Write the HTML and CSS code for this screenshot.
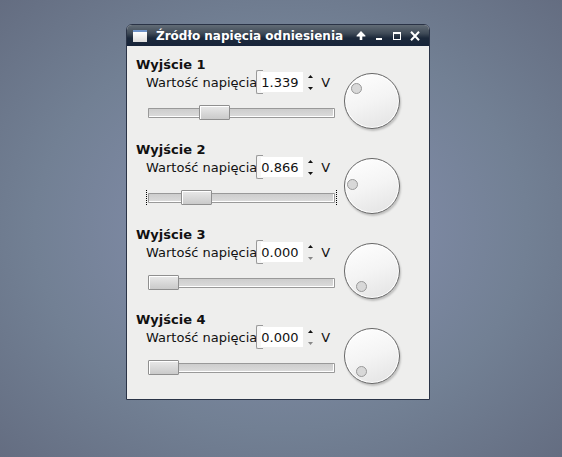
FILE: index.html
```html
<!DOCTYPE html>
<html lang="pl">
<head>
  <meta charset="UTF-8" />
  <meta name="viewport" content="width=device-width, initial-scale=1.0"/>
  <title>Źródło napięcia odniesienia</title>
  <link rel="stylesheet" href="styles.css">
</head>
<body>
  <main class="window">
    <header class="titlebar">
      <span class="app-icon"></span>
      <h1>Źródło napięcia odniesienia</h1>
      <div class="window-buttons">
        <button type="button" aria-label="Zwiń">
          <svg width="10" height="10" viewBox="0 0 10 10"><path d="M5 0L9.4 4.6V5.6H6.3V9H3.7V5.6H0.6V4.6Z"/></svg>
        </button>
        <button type="button" aria-label="Minimalizuj">
          <svg width="10" height="10" viewBox="0 0 10 10"><path d="M2 7H8V9H2Z"/></svg>
        </button>
        <button type="button" aria-label="Maksymalizuj">
          <svg width="10" height="10" viewBox="0 0 10 10"><path fill-rule="evenodd" d="M1 1H9V9H1ZM2 3V8H8V3Z"/></svg>
        </button>
        <button type="button" aria-label="Zamknij">
          <svg width="10" height="10" viewBox="0 0 10 10"><path class="cross" d="M1 0.8L9 9.2M9 0.8L1 9.2"/></svg>
        </button>
      </div>
    </header>

    <div class="outputs" id="outputs">
      <!-- Outputs are injected here -->
    </div>
  </main>

  <script>
    const MAX = 4.096;

    const outputs = [
      { name: "Wyjście 1", value: 1.339 },
      { name: "Wyjście 2", value: 0.866, focused: true },
      { name: "Wyjście 3", value: 0 },
      { name: "Wyjście 4", value: 0 }
    ];

    const list = document.getElementById('outputs');

    outputs.forEach((output, i) => {
      const section = document.createElement('section');
      section.className = 'output';
      section.innerHTML = `
        <div class="controls">
          <h2>${output.name}</h2>
          <div class="value-row">
            <label for="value${i}">Wartość napięcia</label>
            <div class="spin">
              <input type="number" id="value${i}" min="0" max="${MAX}" step="0.001">
              <div class="spin-buttons">
                <button type="button" class="up" aria-label="Więcej">
                  <svg width="5" height="3" viewBox="0 0 5 3"><path d="M0 3L2.5 0L5 3Z"/></svg>
                </button>
                <button type="button" class="down" aria-label="Mniej">
                  <svg width="5" height="3" viewBox="0 0 5 3"><path d="M0 0L2.5 3L5 0Z"/></svg>
                </button>
              </div>
            </div>
            <span>V</span>
          </div>
          <div class="slider ${output.focused ? 'focused' : ''}">
            <input type="range" min="0" max="${MAX}" step="0.001" aria-label="${output.name}">
          </div>
        </div>
        <div class="dial"><span class="knob"></span></div>
      `;
      list.appendChild(section);

      const number = section.querySelector('input[type=number]');
      const range = section.querySelector('input[type=range]');
      const up = section.querySelector('.up');
      const down = section.querySelector('.down');
      const knob = section.querySelector('.knob');

      function setValue(value) {
        value = Math.min(MAX, Math.max(0, value));
        output.value = value;
        number.value = value.toFixed(3);
        range.value = value;
        up.disabled = value >= MAX;
        down.disabled = value <= 0;

        // the dial turns 300 degrees, starting at the lower left
        const angle = (240 - 300 * value / MAX) * Math.PI / 180;
        knob.style.left = Math.round(27 + 19 * Math.cos(angle)) + 'px';
        knob.style.top = Math.round(27 - 19 * Math.sin(angle)) + 'px';
      }

      number.onchange = () => setValue(Number(number.value));
      range.oninput = () => setValue(Number(range.value));
      up.onclick = () => setValue(output.value + 0.001);
      down.onclick = () => setValue(output.value - 0.001);

      setValue(output.value);
    });
  </script>
</body>
</html>
```
FILE: styles.css
```css
* {
  box-sizing: border-box;
}

body {
  margin: 0;
  min-height: 100vh;
  padding: 24px 132px 24px 126px;
  font-family: "DejaVu Sans", Verdana, sans-serif;
  font-size: 13px;
  line-height: 15px;
  color: #111;
  background: radial-gradient(ellipse at center, #848fac 0%, #7b87a0 38%, #728094 62%, #646d81 100%);
}

button {
  display: flex;
  align-items: center;
  justify-content: center;
  margin: 0;
  padding: 0;
  border: none;
  background: none;
}

.window {
  border: 1px solid #2a3346;
  border-radius: 6px 6px 0 0;
  background: #eeeeed;
}

.titlebar {
  display: flex;
  align-items: center;
  height: 21px;
  padding: 0 5px 0 6px;
  border-radius: 5px 5px 0 0;
  background: linear-gradient(#626c76 0%, #3f4a57 40%, #1c293b 62%, #17243a 100%);
  color: #fff;
}

.app-icon {
  width: 14px;
  height: 12px;
  border-top: 2px solid #6f93c8;
  background: linear-gradient(#fff, #dcdcdc);
}

h1 {
  flex: 1;
  margin: 0 0 0 9px;
  padding-top: 2px;
  font-size: 12px;
  white-space: nowrap;
}

.window-buttons {
  display: flex;
}

.window-buttons button {
  width: 18px;
  height: 20px;
}

.window-buttons svg {
  fill: #fff;
}

.window-buttons .cross {
  fill: none;
  stroke: #fff;
  stroke-width: 2;
}

.outputs {
  display: flex;
  flex-direction: column;
  gap: 13px;
  padding: 11px 29px 15px 9px;
}

.output {
  display: flex;
  gap: 7px;
}

.controls {
  flex: 1;
  min-width: 0;
}

h2 {
  margin: 0;
  font-size: 13px;
  line-height: 15px;
}

.value-row {
  display: flex;
  align-items: center;
  height: 20px;
  margin-left: 10px;
  white-space: nowrap;
}

.spin {
  display: flex;
  align-items: center;
  position: relative;
  margin: 0 7px 0 -1px;
  padding-left: 5px;
}

/* left end of the spin box frame, behind the field */
.spin::before {
  content: "";
  position: absolute;
  top: 0;
  bottom: 0;
  left: 0;
  width: 6px;
  border: 1px solid #999;
  border-right: none;
  border-radius: 2px 0 0 2px;
  background: #f6f6f6;
}

.spin input {
  position: relative;
  width: 42px;
  height: 20px;
  margin: 0;
  padding: 0;
  border: none;
  background: #fff;
  color: #111;
  font: inherit;
  outline: none;
  appearance: textfield;
  -moz-appearance: textfield;
}

.spin input::-webkit-inner-spin-button,
.spin input::-webkit-outer-spin-button {
  -webkit-appearance: none;
  margin: 0;
}

.spin-buttons {
  display: flex;
  flex-direction: column;
  margin-left: 4px;
}

.spin-buttons button {
  width: 7px;
  height: 12px;
}

.spin-buttons svg {
  fill: #111;
}

.spin-buttons button:disabled svg {
  fill: #888;
}

.slider {
  height: 15px;
  margin: 13px 0 0 10px;
  padding: 0 1px;
  border: 0 solid transparent;
  border-width: 0 1px;
}

.slider.focused {
  border-style: dotted;
  border-color: #000;
}

.slider input {
  display: block;
  width: 100%;
  height: 15px;
  margin: 0;
  background: none;
  outline: none;
  appearance: none;
  -webkit-appearance: none;
}

.slider input::-webkit-slider-runnable-track {
  height: 10px;
  border-radius: 1px;
  background: linear-gradient(#cbcbcb, #dedede);
  box-shadow: inset 0 0 0 1px #999, inset -2px -2px 0 #fff;
}

.slider input::-webkit-slider-thumb {
  -webkit-appearance: none;
  width: 31px;
  height: 15px;
  margin-top: -3px;
  border: 1px solid #8f8f8f;
  border-radius: 1px;
  background: linear-gradient(#e9e9e9, #cacaca);
  box-shadow: inset 1px 1px 0 #fff;
}

.dial {
  position: relative;
  width: 56px;
  height: 56px;
  margin-top: 16px;
  border-radius: 50%;
  border: 1px solid #666;
  background: linear-gradient(160deg, #fff 0%, #f4f4f4 50%, #e2e2e2 100%);
  box-shadow: inset 0 0 0 1px #fff, 1px 2px 2px rgba(0, 0, 0, 0.2);
}

.knob {
  position: absolute;
  width: 11px;
  height: 11px;
  margin: -6px 0 0 -6px;
  border: 1px solid #999;
  border-radius: 50%;
  background: #d8d8d8;
}
```
